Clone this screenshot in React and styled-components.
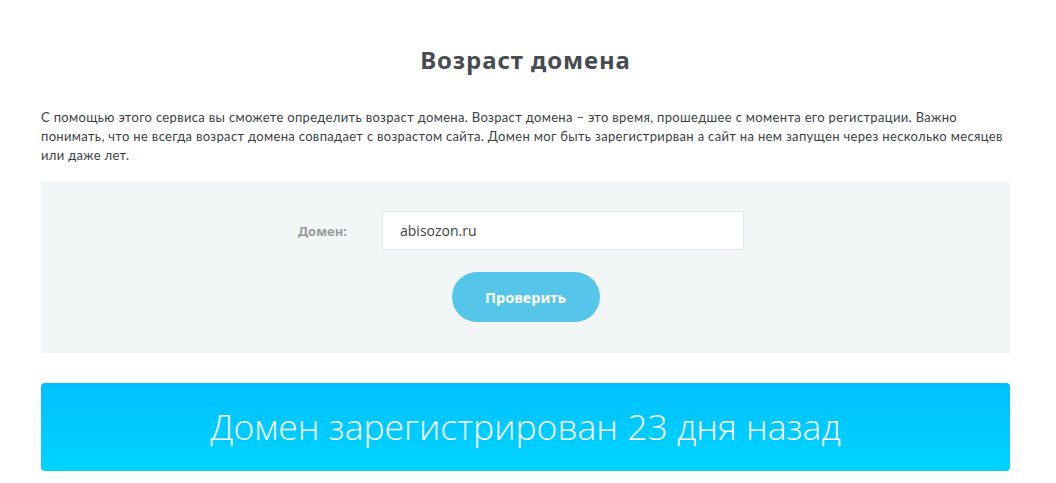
import React from "react";
import styled, { createGlobalStyle } from "styled-components";

const Global = createGlobalStyle`
  html, body { margin: 0; padding: 0; background: #fff; }
  body { font-family: "Open Sans", "Liberation Sans", sans-serif; }
`;

const Page = styled.div`
  width: 969px;
  margin: 0 0 0 41px;
  padding-top: 44px;
`;

const Title = styled.h1`
  margin: 0;
  text-align: center;
  font-family: "Noto Sans", "Open Sans", sans-serif;
  font-weight: 700;
  font-size: 24px;
  letter-spacing: 0.9px;
  line-height: 32px;
  color: #474c52;
`;

const Intro = styled.p`
  margin: 32px 0 0;
  font-family: "Lato", "Open Sans", sans-serif;
  font-size: 13px;
  letter-spacing: 0.33px;
  line-height: 19px;
  color: #3c3f44;
`;

const Panel = styled.form`
  margin-top: 16px;
  background: #f3f6f7;
  height: 172px;
  box-sizing: border-box;
  padding-top: 30px;
  display: flex;
  flex-direction: column;
`;

const Row = styled.div`
  display: flex;
  align-items: center;
  padding-left: 257px;
`;

const Label = styled.label`
  width: 84px;
  font-family: "Noto Sans", "Open Sans", sans-serif;
  font-weight: 700;
  font-size: 13px;
  color: #9a9a9a;
`;

const Input = styled.input`
  width: 362px;
  height: 39px;
  box-sizing: border-box;
  border: 1px solid #e6eaec;
  background: #fff;
  padding: 0 17px;
  font-family: "Open Sans", sans-serif;
  font-size: 14px;
  color: #444;
  outline: none;
`;

const Button = styled.button`
  align-self: center;
  margin-top: 22px;
  width: 148px;
  height: 50px;
  border: none;
  border-radius: 25px;
  background: #55c5ea;
  color: #fff;
  font-family: "Noto Sans", "Open Sans", sans-serif;
  font-weight: 700;
  font-size: 14.5px;
  cursor: pointer;
`;

const Result = styled.div`
  margin-top: 30px;
  height: 88px;
  border-radius: 4px;
  background: linear-gradient(180deg, #00c0ff 0%, #00d4ff 100%);
  display: flex;
  align-items: center;
  justify-content: center;
  padding-bottom: 3px;
  box-sizing: border-box;
  color: #fff;
  font-family: "Open Sans", sans-serif;
  font-weight: 300;
  font-size: 35.5px;
`;

export default function App() {
  return (
    <>
      <Global />
      <Page>
        <Title>Возраст домена</Title>
        <Intro>
          С помощью этого сервиса вы сможете определить возраст домена. Возраст домена – это время, прошедшее с момента его регистрации. Важно понимать, что не всегда возраст домена совпадает с возрастом сайта. Домен мог быть зарегистрирван а сайт на нем запущен через несколько месяцев или даже лет.
        </Intro>
        <Panel onSubmit={(e) => e.preventDefault()}>
          <Row>
            <Label htmlFor="domain">Домен:</Label>
            <Input id="domain" defaultValue="abisozon.ru" />
          </Row>
          <Button type="submit">Проверить</Button>
        </Panel>
        <Result>Домен зарегистрирован 23 дня назад</Result>
      </Page>
    </>
  );
}
